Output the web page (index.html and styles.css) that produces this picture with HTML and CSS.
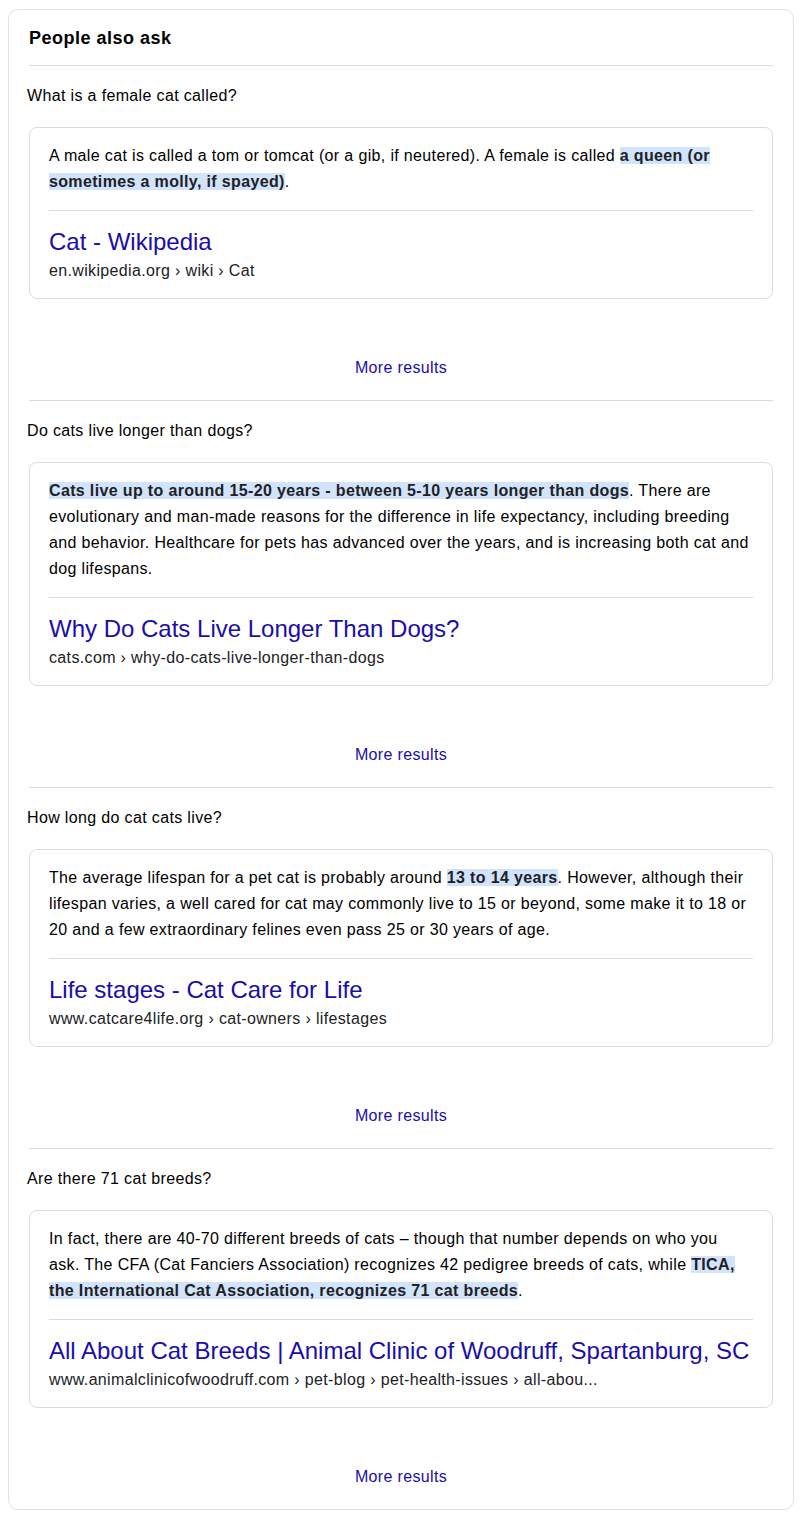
FILE: index.html
```html
<!DOCTYPE html>
<html lang="en">
<head>
<meta charset="utf-8">
<title>People also ask</title>
<link rel="stylesheet" href="styles.css">
</head>
<body>
<div class="paa">
  <div class="paa-header">People also ask</div>

  <div class="qa">
    <div class="question">What is a female cat called?</div>
    <div class="answer-card">
      <div class="snippet">A male cat is called a tom or tomcat (or a gib, if neutered). A female is called <b class="hl">a queen (or sometimes a molly, if spayed)</b>.</div>
      <div class="source">
        <a class="source-title" href="#">Cat - Wikipedia</a>
        <div class="source-url">en.wikipedia.org › wiki › Cat</div>
      </div>
    </div>
    <div class="more"><a href="#">More results</a></div>
  </div>

  <div class="qa">
    <div class="question">Do cats live longer than dogs?</div>
    <div class="answer-card">
      <div class="snippet"><b class="hl">Cats live up to around 15-20 years - between 5-10 years longer than dogs</b>. There are evolutionary and man-made reasons for the difference in life expectancy, including breeding and behavior. Healthcare for pets has advanced over the years, and is increasing both cat and dog lifespans.</div>
      <div class="source">
        <a class="source-title" href="#">Why Do Cats Live Longer Than Dogs?</a>
        <div class="source-url">cats.com › why-do-cats-live-longer-than-dogs</div>
      </div>
    </div>
    <div class="more"><a href="#">More results</a></div>
  </div>

  <div class="qa">
    <div class="question">How long do cat cats live?</div>
    <div class="answer-card">
      <div class="snippet">The average lifespan for a pet cat is probably around <b class="hl">13 to 14 years</b>. However, although their lifespan varies, a well cared for cat may commonly live to 15 or beyond, some make it to 18 or 20 and a few extraordinary felines even pass 25 or 30 years of age.</div>
      <div class="source">
        <a class="source-title" href="#">Life stages - Cat Care for Life</a>
        <div class="source-url">www.catcare4life.org › cat-owners › lifestages</div>
      </div>
    </div>
    <div class="more"><a href="#">More results</a></div>
  </div>

  <div class="qa last">
    <div class="question">Are there 71 cat breeds?</div>
    <div class="answer-card">
      <div class="snippet">In fact, there are 40-70 different breeds of cats – though that number depends on who you ask. The CFA (Cat Fanciers Association) recognizes 42 pedigree breeds of cats, while <b class="hl">TICA, the International Cat Association, recognizes 71 cat breeds</b>.</div>
      <div class="source">
        <a class="source-title" href="#">All About Cat Breeds | Animal Clinic of Woodruff, Spartanburg, SC</a>
        <div class="source-url">www.animalclinicofwoodruff.com › pet-blog › pet-health-issues › all-abou...</div>
      </div>
    </div>
    <div class="more"><a href="#">More results</a></div>
  </div>
</div>
</body>
</html>
```

FILE: styles.css
```css
* {
  box-sizing: border-box;
}

body {
  margin: 9px 0 0 8px;
  background: #ffffff;
  font-family: "Liberation Sans", Arial, sans-serif;
  color: #202124;
}

.paa {
  width: 786px;
  border: 1px solid #dfe1e5;
  border-radius: 10px;
  padding: 0 20px;
}

.paa-header {
  font-size: 18px;
  font-weight: bold;
  line-height: 24px;
  letter-spacing: 0.5px;
  padding: 16px 0 15px 0;
  border-bottom: 1px solid #dadce0;
  color: #000;
}

.qa {
  border-bottom: 1px solid #dadce0;
}

.qa.last {
  border-bottom: none;
}

.question {
  font-size: 16px;
  line-height: 22px;
  letter-spacing: 0.35px;
  padding: 19px 0 0 0;
  margin-left: -2px;
  margin-bottom: 20px;
  color: #000;
}

.qa:first-of-type .question {
  padding-top: 22px;
  margin-bottom: 16px;
}

.answer-card {
  border: 1px solid #dadce0;
  border-radius: 8px;
  padding: 15px 19px 16px;
}

.snippet {
  font-size: 16px;
  line-height: 26px;
  letter-spacing: 0.35px;
  padding-bottom: 15px;
  border-bottom: 1px solid #dadce0;
  color: #000;
}

.hl {
  background: #d2e3fc;
  color: #202124;
}

.source {
  padding-top: 16px;
}

.source-title {
  display: block;
  font-size: 24px;
  line-height: 30px;
  color: #1a0dab;
  text-decoration: none;
}

.source-url {
  margin-top: 3px;
  font-size: 16px;
  line-height: 22px;
  letter-spacing: 0.35px;
  color: #202124;
  white-space: nowrap;
}

.more {
  text-align: center;
  font-size: 16px;
  line-height: 22px;
  letter-spacing: 0.35px;
  margin-top: 58px;
  padding-bottom: 21px;
}

.qa.last .more {
  padding-bottom: 21px;
}

.more a {
  color: #1a0dab;
  text-decoration: none;
}
```
